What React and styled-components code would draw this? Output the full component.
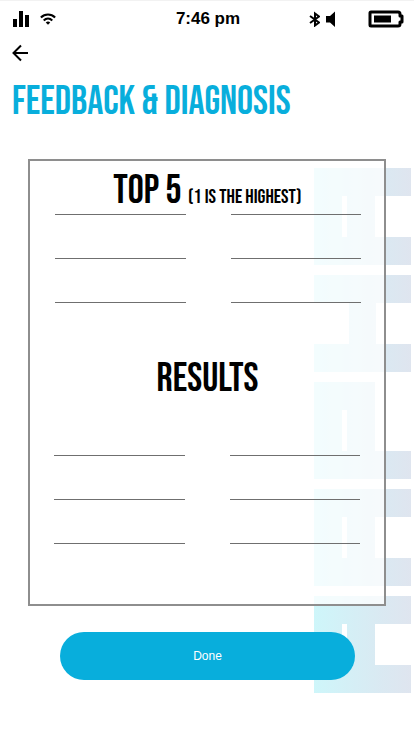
import React from "react";
import styled, { createGlobalStyle } from "styled-components";

const GlobalStyle = createGlobalStyle`
  *, *::before, *::after { box-sizing: border-box; }
  body {
    margin: 0;
    background: #fff;
    color: #000;
    font-family: "Liberation Sans", Arial, sans-serif;
  }
`;

const display = `"Bebas Neue", "Liberation Sans Narrow", "Arial Narrow", "Liberation Sans", sans-serif`;

const Screen = styled.div`
  display: flex;
  flex-direction: column;
  min-height: 100vh;
  border-top: 1px solid #f2f2f2;
`;

const StatusBar = styled.header`
  display: grid;
  grid-template-columns: 1fr auto 1fr;
  align-items: center;
  height: 36px;
  padding: 0 10px 0 12px;
`;

const StatusGroup = styled.div`
  display: flex;
  align-items: center;
  justify-content: ${(p) => (p.$end ? "flex-end" : "flex-start")};
  gap: ${(p) => p.$gap}px;

  svg { display: block; }
`;

const Clock = styled.time`
  font-size: 17px;
  line-height: 20px;
  font-weight: 700;
`;

const BackButton = styled.button`
  align-self: flex-start;
  display: flex;
  margin-left: 8px;
  padding: 4px;
  border: 0;
  background: none;
  cursor: pointer;
`;

const PageTitle = styled.h1`
  margin: 0;
  padding: 5px 12px 0;
  color: #08aedc;
  font-family: ${display};
  font-size: 40px;
  line-height: 56px;
  font-weight: 400;
  white-space: nowrap;
`;

const Stage = styled.main`
  position: relative;
  isolation: isolate;
  display: flex;
  flex-direction: column;
  margin-top: 29px;
  padding: 0 28px;
`;

const Watermark = styled.svg`
  position: absolute;
  z-index: -1;
  top: 9px;
  right: 3px;
`;

const Panel = styled.form`
  padding: 6px 23px 60px 24px;
  border: 2px solid #8e8e8e;
  background: rgba(255, 255, 255, 0.75);
`;

const Heading = styled.h2`
  margin: 0;
  font-family: ${display};
  font-size: 40px;
  line-height: 48px;
  font-weight: 400;
  text-align: center;
  white-space: nowrap;

  small { font-size: 20px; }
`;

const ResultsHeading = styled(Heading)`
  padding-top: 52px;
`;

const Fields = styled.div`
  display: grid;
  grid-template-columns: repeat(2, 1fr);
  column-gap: 45px;
  margin: ${(p) => (p.$spaced ? "9px 1px 0 0" : "-50px 0 0 1px")};
`;

const LineInput = styled.input`
  width: 100%;
  min-width: 0;
  height: 44px;
  padding: 20px 2px 0;
  border: 0;
  border-bottom: 1px solid #6f6f6f;
  border-radius: 0;
  background: none;
  color: #000;
  font: 16px "Liberation Sans", Arial, sans-serif;
  outline: none;
`;

const DoneButton = styled.button`
  height: 48px;
  margin: 26px 31px 0 32px;
  border: 0;
  border-radius: 24px;
  background: #08aedc;
  color: #fff;
  font: 12px "Liberation Sans", Arial, sans-serif;
  cursor: pointer;
`;

const blocks = [
  [0, 0, 97, 28], [0, 28, 28, 41], [33, 28, 28, 41], [0, 69, 97, 28],
  [0, 107, 97, 28], [35, 135, 27, 41], [0, 176, 97, 28],
  [0, 214, 61, 28], [0, 242, 28, 41], [33, 242, 28, 41], [0, 283, 97, 28],
  [0, 321, 97, 28], [0, 349, 28, 41], [33, 349, 28, 41], [0, 390, 97, 28],
  [0, 428, 97, 28], [0, 456, 28, 41], [33, 456, 28, 41], [0, 497, 97, 28],
];

function FieldGrid({ name, spaced }) {
  return (
    <Fields $spaced={spaced}>
      {[1, 2, 3, 4, 5, 6].map((n) => (
        <LineInput key={n} type="text" aria-label={`${name} ${n}`} />
      ))}
    </Fields>
  );
}

export default function App() {
  return (
    <>
      <GlobalStyle />
      <Screen>
        <StatusBar>
          <StatusGroup $gap={10}>
            <svg width="18" height="18" viewBox="0 0 18 18" aria-hidden="true">
              <path d="M1 9h4v8H1zM7 1h4v16H7zM13 5h4v12h-4z" />
            </svg>
            <svg width="16" height="14" viewBox="0 0 18 14" fill="none" stroke="#000" strokeWidth="2.400" aria-hidden="true">
              <path d="M1 5.300C5.600 0.800 12.400 0.800 17 5.300M4.200 8.600C7 6 11 6 13.800 8.600" />
              <path d="M6.500 10.800C7.900 9.600 10.100 9.600 11.500 10.800L9 13.500z" fill="#000" stroke="none" />
            </svg>
          </StatusGroup>
          <Clock>7:46 pm</Clock>
          <StatusGroup $end $gap={32}>
            <StatusGroup $gap={6}>
              <svg width="12" height="16" viewBox="0 0 12 16" fill="none" stroke="#000" strokeWidth="2" aria-hidden="true">
                <path d="M2 5L11 11.500L7 14.500V2.500L11 5.500L2 12" />
              </svg>
              <svg width="10" height="16" viewBox="0 0 10 16" aria-hidden="true">
                <path d="M0 5h4l5-4.500v15.500l-5-4.500H0z" />
              </svg>
            </StatusGroup>
            <svg width="36" height="18" viewBox="0 0 36 18" aria-hidden="true">
              <path d="M3 2h27q2 0 2 2v2h2v6h-2v2q0 2-2 2H3q-1 0-1-1V3q0-1 1-1z" fill="none" stroke="#000" strokeWidth="3" strokeLinejoin="round" />
              <path d="M6 5.500h17v7H6z" />
            </svg>
          </StatusGroup>
        </StatusBar>
        <BackButton type="button" aria-label="Back">
          <svg width="16" height="24" viewBox="0 0 16 24" fill="none" stroke="#000" strokeWidth="2" aria-hidden="true">
            <path d="M16 12H2M9 4.500L1.500 12L9 19.500" />
          </svg>
        </BackButton>
        <PageTitle>FEEDBACK &amp; DIAGNOSIS</PageTitle>
        <Stage>
          <Watermark width="97" height="525" viewBox="0 0 97 525" aria-hidden="true">
            <defs>
              <linearGradient id="tint" gradientUnits="userSpaceOnUse" x1="0" y1="0" x2="97" y2="0">
                <stop offset="0" stopColor="#cef6fa" />
                <stop offset="0.7" stopColor="#dae9f2" />
                <stop offset="1" stopColor="#dfe5ef" />
              </linearGradient>
            </defs>
            <g fill="url(#tint)" shapeRendering="crispEdges">
              {blocks.map(([x, y, w, h]) => (
                <rect key={`${x}-${y}`} x={x} y={y} width={w} height={h} />
              ))}
            </g>
          </Watermark>
          <Panel>
            <Heading>TOP 5 <small>(1 IS THE HIGHEST)</small></Heading>
            <FieldGrid name="Top entry" />
            <ResultsHeading>RESULTS</ResultsHeading>
            <FieldGrid name="Result" spaced />
          </Panel>
          <DoneButton type="button">Done</DoneButton>
        </Stage>
      </Screen>
    </>
  );
}
